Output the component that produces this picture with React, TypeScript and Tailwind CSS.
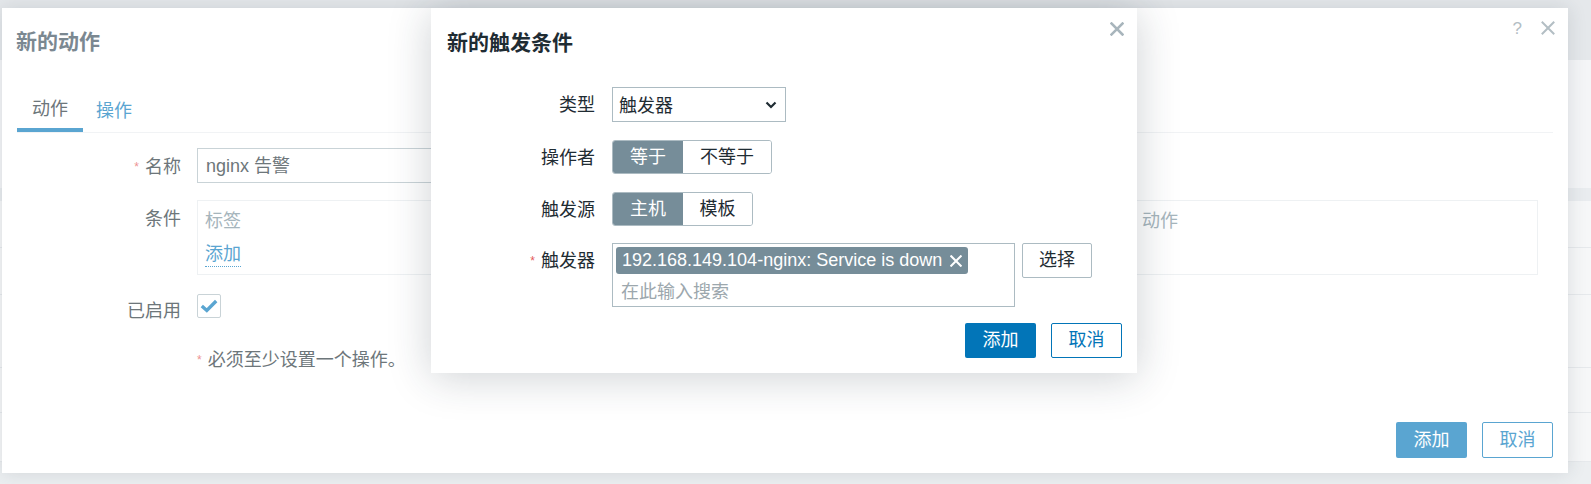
import React from "react"

const font = { fontFamily: '"Liberation Sans", Arial, "Noto Sans CJK SC", sans-serif' }

const XIcon = ({ size = 14, stroke = 2.5, className = "" }: { size?: number; stroke?: number; className?: string }) => (
	<svg width={size} height={size} viewBox="0 0 14 14" className={className}>
		<path d="M1.5 1.5 L12.5 12.5 M12.5 1.5 L1.5 12.5" stroke="currentColor" strokeWidth={stroke} strokeLinecap="square" fill="none" />
	</svg>
)

// page behind both dialogs, only a thin strip on the right shows
const PageBehind = () => (
	<div className="flex flex-col w-full h-full">
		<div className="h-[60px] bg-[#e5e8eb]" />
		<div className="h-[128px] bg-[#f4f5f7]" />
		<div className="h-[13px] bg-[#e9ecef]" />
		<div className="h-[47px] bg-[#f6f7f8] border-b border-[#e6e9ec]" />
		<div className="h-[47px] bg-[#f6f7f8] border-b border-[#e6e9ec]" />
		<div className="h-[73px] bg-[#f6f7f8] border-b border-[#e6e9ec]" />
		<div className="h-[45px] bg-[#f6f7f8] border-b border-[#e6e9ec]" />
		<div className="h-[49px] bg-[#f6f7f8] border-b border-[#e6e9ec]" />
		<div className="flex-1 bg-[#eceff1]" />
	</div>
)

const BackLabel = ({ children, required }: { children: React.ReactNode; required?: boolean }) => (
	<div className="w-[180px] pr-[16px] pt-[2px] h-[35px] leading-[35px] text-right text-[#6d767a] shrink-0">
		{required && <span className="text-[#ed9393] text-[12px] align-top mr-[6px]">*</span>}
		{children}
	</div>
)

const ActionDialog = () => (
	<div className="absolute left-[2px] top-[8px] w-[1566px] h-[465px] bg-white flex flex-col shadow-[0_0_18px_rgba(40,55,70,0.14)]">
		<div className="h-[68px] flex justify-between">
			<div className="pl-[14px] flex items-center text-[21px] font-bold text-[#7b8891]">新的动作</div>
			<div className="flex items-start pt-[13px] pr-[13px] gap-[19px] text-[#b3bec4]">
				<span className="text-[17px] leading-[16px]">?</span>
				<XIcon size={14} stroke={2} />
			</div>
		</div>

		<div className="mx-[15px] mt-[14px] flex border-b border-[#f1f3f5]">
			<div className="h-[42px] px-[15px] flex items-center border-b-4 border-[#5aa5d1] text-[#6d767a]">动作</div>
			<div className="h-[42px] px-[13px] flex items-center text-[#5aa5d1]">操作</div>
		</div>

		<div className="px-[15px] mt-[15px] flex flex-col">
			<div className="flex mb-[17px]">
				<BackLabel required>名称</BackLabel>
				<div className="w-[600px] h-[35px] border border-[#c9d3d7] px-[8px] pt-[2px] leading-[31px] text-[#6d767a]">nginx 告警</div>
			</div>

			<div className="flex mb-[17px]">
				<BackLabel>条件</BackLabel>
				<div className="w-[1341px] h-[75px] border border-[#eef1f3] px-[7px] pt-[7px]">
					<div className="flex h-[26px] leading-[26px] text-[#a6b5bc]">
						<div className="w-[250px]">标签</div>
						<div className="w-[687px]">名称</div>
						<div>动作</div>
					</div>
					<div className="mt-[7px] h-[26px] leading-[26px]">
						<span className="text-[#5aa5d1] border-b border-dotted border-[#5aa5d1] pb-[2px]">添加</span>
					</div>
				</div>
			</div>

			<div className="flex mb-[16px]">
				<BackLabel>已启用</BackLabel>
				<div className="mt-[2px] w-[24px] h-[24px] border border-[#c9d3d7] rounded-[2px] flex items-center justify-center">
					<svg width="18" height="14" viewBox="0 0 18 14">
						<path d="M1.8 7 L6.8 11.5 L16.2 2" stroke="#5aa5d1" strokeWidth="3.4" fill="none" />
					</svg>
				</div>
			</div>

			<div className="flex">
				<div className="w-[180px] shrink-0" />
				<div className="h-[35px] leading-[35px] text-[#6d767a]">
					<span className="text-[#ed9393] text-[12px] align-top mr-[6px]">*</span>必须至少设置一个操作。
				</div>
			</div>
		</div>

		<div className="mt-auto flex justify-end gap-[15px] px-[15px] pb-[15px]">
			<div className="w-[71px] h-[36px] rounded-[2px] bg-[#5aa5d1] text-white flex items-center justify-center">添加</div>
			<div className="w-[71px] h-[36px] rounded-[2px] border border-[#5aa5d1] text-[#5aa5d1] bg-white flex items-center justify-center">取消</div>
		</div>
	</div>
)

const Label = ({ children, required, h = 35 }: { children: React.ReactNode; required?: boolean; h?: number }) => (
	<div
		className={`w-[181px] pr-[17px] pt-[1px] text-right text-[#1f2c33] shrink-0 ${h === 34 ? "h-[34px] leading-[34px]" : "h-[35px] leading-[35px]"}`}
	>
		{required && <span className="text-[#e45959] text-[12px] align-top mr-[6px]">*</span>}
		{children}
	</div>
)

const Segmented = ({ items, widths }: { items: string[]; widths: string[] }) => (
	<div className="flex h-[34px] border border-[#acbbc2] rounded-[3px] overflow-hidden">
		{items.map((item, i) => (
			<div
				key={item}
				className={`${widths[i]} flex items-center justify-center pt-[1px] ${
					i === 0 ? "bg-[#768d99] text-white" : "bg-white text-[#1f2c33]"
				}`}
			>
				{item}
			</div>
		))}
	</div>
)

const TriggerDialog = () => (
	<div className="absolute left-[431px] top-[8px] w-[706px] h-[365px] bg-white flex flex-col shadow-[0_4px_40px_rgba(30,45,60,0.22)]">
		<div className="h-[70px] flex justify-between">
			<div className="pl-[16px] flex items-center text-[21px] font-bold text-[#1f2c33]">新的触发条件</div>
			<div className="pt-[14px] pr-[13px] text-[#a8b5bc]">
				<XIcon size={14} stroke={2.5} />
			</div>
		</div>

		<div className="mt-[9px] flex flex-col">
			<div className="flex mb-[18px]">
				<Label>类型</Label>
				<div className="w-[174px] h-[35px] border border-[#acbbc2] flex items-center justify-between pl-[6px] pr-[8px] text-[#1f2c33]">
					<span className="pt-[3px]">触发器</span>
					<svg width="12" height="8" viewBox="0 0 12 8">
						<path d="M1.5 1.5 L6 6 L10.5 1.5" stroke="#1f2c33" strokeWidth="2.2" fill="none" />
					</svg>
				</div>
			</div>

			<div className="flex mb-[18px]">
				<Label h={34}>操作者</Label>
				<Segmented items={["等于", "不等于"]} widths={["w-[70px]", "w-[88px]"]} />
			</div>

			<div className="flex mb-[17px]">
				<Label h={34}>触发源</Label>
				<Segmented items={["主机", "模板"]} widths={["w-[70px]", "w-[69px]"]} />
			</div>

			<div className="flex">
				<Label required>触发器</Label>
				<div className="w-[403px] h-[64px] border border-[#acbbc2] p-[3px]">
					<div className="inline-flex items-center h-[27px] rounded-[3px] bg-[#768d99] text-white pl-[6px] pr-[6px] gap-[8px]">
						<span>192.168.149.104-nginx: Service is down</span>
						<XIcon size={12} stroke={2.4} />
					</div>
					<div className="h-[30px] leading-[30px] pt-[3px] pl-[5px] text-[#9ca7ad]">在此输入搜索</div>
				</div>
				<div className="ml-[7px] w-[70px] h-[35px] border border-[#acbbc2] rounded-[2px] flex items-center justify-center text-[#1f2c33]">
					选择
				</div>
			</div>
		</div>

		<div className="mt-[16px] flex justify-end gap-[15px] pr-[15px]">
			<div className="w-[71px] h-[35px] rounded-[2px] bg-[#0275b8] text-white flex items-center justify-center">添加</div>
			<div className="w-[71px] h-[35px] rounded-[2px] border border-[#0275b8] text-[#0275b8] bg-white flex items-center justify-center">取消</div>
		</div>
	</div>
)

export default function App() {
	return (
		<div className="relative w-[1591px] h-[484px] overflow-hidden text-[18px]" style={font}>
			<PageBehind />
			<ActionDialog />
			<TriggerDialog />
		</div>
	)
}
